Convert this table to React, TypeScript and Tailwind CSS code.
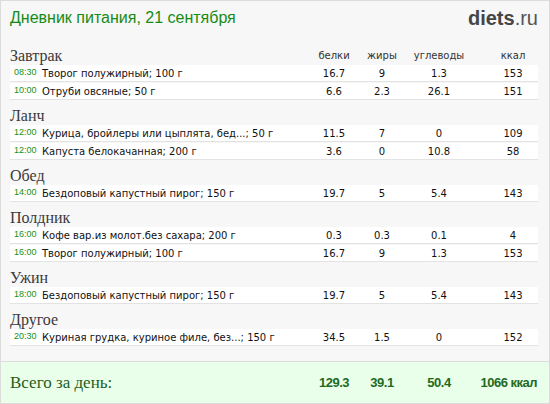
const meals = [
  {
    title: "Завтрак",
    items: [
      { time: "08:30", name: "Творог полужирный; 100 г", p: "16.7", f: "9", c: "1.3", k: "153" },
      { time: "10:00", name: "Отруби овсяные; 50 г", p: "6.6", f: "2.3", c: "26.1", k: "151" },
    ],
  },
  {
    title: "Ланч",
    items: [
      { time: "12:00", name: "Курица, бройлеры или цыплята, бед...; 50 г", p: "11.5", f: "7", c: "0", k: "109" },
      { time: "12:00", name: "Капуста белокачанная; 200 г", p: "3.6", f: "0", c: "10.8", k: "58" },
    ],
  },
  {
    title: "Обед",
    items: [{ time: "14:00", name: "Бездоповый капустный пирог; 150 г", p: "19.7", f: "5", c: "5.4", k: "143" }],
  },
  {
    title: "Полдник",
    items: [
      { time: "16:00", name: "Кофе вар.из молот.без сахара; 200 г", p: "0.3", f: "0.3", c: "0.1", k: "4" },
      { time: "16:00", name: "Творог полужирный; 100 г", p: "16.7", f: "9", c: "1.3", k: "153" },
    ],
  },
  {
    title: "Ужин",
    items: [{ time: "18:00", name: "Бездоповый капустный пирог; 150 г", p: "19.7", f: "5", c: "5.4", k: "143" }],
  },
  {
    title: "Другое",
    items: [{ time: "20:30", name: "Куриная грудка, куриное филе, без...; 150 г", p: "34.5", f: "1.5", c: "0", k: "152" }],
  },
];

const sans = "font-['DejaVu_Sans',sans-serif]";
const serif = "font-['Liberation_Serif',serif]";

export default function App() {
  return (
    <div className="w-[550px] h-[404px] border border-[#dcdcdc] bg-[#f7f7f7] flex flex-col overflow-hidden">
      {/* header */}
      <div className="flex justify-between items-center h-[24px] mt-[5px] pl-[9px] pr-[11px]">
        <div className="font-['Liberation_Sans',sans-serif] text-[16px] text-[#168b16] leading-[24px]">
          Дневник питания, 21 сентября
        </div>
        <div className="font-['Liberation_Sans',sans-serif] text-[20px] leading-[24px] text-[#454545]">
          <span className="font-bold">diets</span>
          <span className="text-[#555]">.ru</span>
        </div>
      </div>

      {/* meals */}
      <div className="mt-[15px] pl-[9px] pr-[11px]">
        {meals.map((meal, i) => (
          <div key={meal.title} className="mb-[5px]">
            <div className="flex items-start h-[20px] pt-[3px]">
              <div className={`flex-1 ${serif} text-[16px] text-[#3a3a3a] leading-[15px]`}>{meal.title}</div>
              {i === 0 && (
                <div className={`flex ${sans} text-[10px] leading-[15px] text-[#333]`}>
                  <div className="w-[48px] text-center">белки</div>
                  <div className="w-[48px] text-center">жиры</div>
                  <div className="w-[66px] text-center">углеводы</div>
                  <div className="w-[66px] pl-[16px] text-center">ккал</div>
                </div>
              )}
            </div>
            {meal.items.map((it, j) => (
              <div
                key={j}
                className={`flex items-center h-[17px] bg-white border-b border-[#e3e3e3] mb-px ${sans} text-[10px] text-[#111]`}
              >
                <div className="flex-1 flex items-center min-w-0">
                  <span className="font-['Liberation_Sans',sans-serif] text-[9px] text-[#159015] ml-[4px] w-[28px]">
                    {it.time}
                  </span>
                  <span className="whitespace-nowrap">{it.name}</span>
                </div>
                <div className="w-[48px] text-center">{it.p}</div>
                <div className="w-[48px] text-center">{it.f}</div>
                <div className="w-[66px] text-center">{it.c}</div>
                <div className="w-[66px] pl-[16px] text-center">{it.k}</div>
              </div>
            ))}
          </div>
        ))}
      </div>

      {/* totals */}
      <div className="mt-auto h-[42px] border-t border-[#dcdcdc] bg-[#eaffea] flex items-center pl-[9px] pr-[11px]">
        <div className={`flex-1 ${serif} text-[17px] text-[#1d5e1d]`}>Всего за день:</div>
        <div className="flex whitespace-nowrap font-['Liberation_Sans',sans-serif] font-bold text-[13px] tracking-[-0.5px] text-[#1f6a1f]">
          <div className="w-[48px] text-center">129.3</div>
          <div className="w-[48px] text-center">39.1</div>
          <div className="w-[66px] text-center">50.4</div>
          <div className="w-[66px] text-right pr-px">1066 ккал</div>
        </div>
      </div>
    </div>
  );
}
